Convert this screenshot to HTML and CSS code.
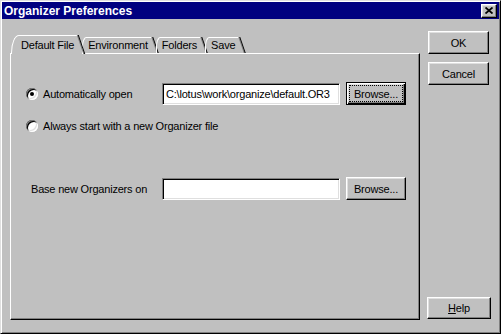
FILE: index.html
```html
<!DOCTYPE html>
<html lang="en">
<head>
    <meta charset="UTF-8">
    <title>Organizer Preferences</title>
    <link rel="stylesheet" href="styles.css">
</head>
<body>
    <div class="window">
        <div class="titlebar">
            <span class="title">Organizer Preferences</span>
            <button class="close" type="button">
                <svg width="8" height="7" viewBox="0 0 8 7"><path d="M0.5 0.5 L7.5 6.5 M7.5 0.5 L0.5 6.5" stroke="#000" stroke-width="1.8" fill="none"/></svg>
            </button>
        </div>

        <div class="main">
            <div class="sheet">
                <div class="tabs">
                    <div class="tab selected">Default File</div>
                    <div class="tab">Environment</div>
                    <div class="tab">Folders</div>
                    <div class="tab">Save</div>
                </div>
                <div class="panel">
                    <div class="row">
                        <label class="choice"><span class="radio checked"></span>Automatically open</label>
                        <input class="field" type="text" value="C:\lotus\work\organize\default.OR3">
                        <button class="btn default" type="button">Browse...</button>
                    </div>
                    <div class="row short">
                        <label class="choice wide"><span class="radio"></span>Always start with a new Organizer file</label>
                    </div>
                    <div class="row base">
                        <label class="choice indent">Base new Organizers on</label>
                        <input class="field" type="text" value="">
                        <button class="btn" type="button">Browse...</button>
                    </div>
                </div>
            </div>

            <div class="actions">
                <button class="btn action" type="button">OK</button>
                <button class="btn action" type="button">Cancel</button>
                <button class="btn help" type="button"><u>H</u>elp</button>
            </div>
        </div>
    </div>
</body>
</html>
```

FILE: styles.css
```css
body {
    margin: 0;
    font-family: 'Liberation Sans', Arial, sans-serif;
    font-size: 11px;
    letter-spacing: -0.2px;
    color: #000;
    background: #c0c0c0;
}

.window {
    width: 501px;
    height: 334px;
    box-sizing: border-box;
    padding: 1px;
    background: #c0c0c0;
    border: 1px solid;
    border-color: #dfdfdf #000 #000 #dfdfdf;
    box-shadow: inset 1px 1px #fff, inset -1px -1px #808080;
}

.titlebar {
    height: 17px;
    background: #000080;
    display: flex;
    align-items: center;
    justify-content: space-between;
    padding: 0 2px 0 2px;
}

.title {
    color: #fff;
    font-weight: bold;
    font-size: 12px;
    letter-spacing: 0;
}

.close {
    width: 16px;
    height: 14px;
    padding: 0;
    display: flex;
    align-items: center;
    justify-content: center;
    background: #c0c0c0;
    border: 1px solid;
    border-color: #fff #000 #000 #fff;
    box-shadow: inset -1px -1px #808080, inset 1px 1px #dfdfdf;
}

.main {
    display: flex;
    padding: 12px 6px 0 8px;
}

.sheet {
    width: 410px;
}

.tabs {
    display: flex;
    align-items: flex-end;
    height: 22px;
    padding-left: 1px;
}

.tab {
    position: relative;
    height: 16px;
    line-height: 16px;
    padding: 0 8px 0 6px;
    white-space: nowrap;
}

.tab::before {
    content: "";
    position: absolute;
    left: 0;
    right: 4px;
    top: 0;
    bottom: 0;
    border-top: 1px solid #fff;
    border-left: 1px solid #fff;
    border-top-left-radius: 4px 10px;
}

.tab::after {
    content: "";
    position: absolute;
    right: 0;
    top: 0;
    bottom: 0;
    width: 1px;
    background: #000;
    box-shadow: -1px 0 #808080;
    transform: skewX(19deg);
}

.tab.selected {
    height: 19px;
    padding: 2px 8px 0 10px;
    margin-bottom: -1px;
    box-sizing: border-box;
    background: #c0c0c0;
    z-index: 1;
}

.tab.selected::before {
    bottom: 0;
    border-top-left-radius: 8px 18px;
}

.panel {
    height: 267px;
    box-sizing: border-box;
    padding: 28px 0 0 15px;
    border: 1px solid;
    border-color: #fff #000 #000 #fff;
    box-shadow: inset -1px -1px #808080;
}

.row {
    display: flex;
    align-items: center;
    height: 23px;
}

.row.short {
    height: 14px;
    margin-top: 14px;
}

.row.base {
    margin-top: 44px;
}

.choice {
    width: 136px;
    display: flex;
    align-items: center;
    gap: 5px;
    white-space: nowrap;
}

.choice.wide {
    width: auto;
}

.choice.indent {
    padding-left: 5px;
    width: 131px;
}

.radio {
    position: relative;
    width: 12px;
    height: 12px;
    border-radius: 50%;
    background: #fff;
    box-shadow: inset 1px 1px #808080, inset -1px -1px #fff, inset 2px 2px #000, inset -2px -2px #dfdfdf;
}

.radio.checked::after {
    content: "";
    position: absolute;
    left: 4px;
    top: 4px;
    width: 4px;
    height: 4px;
    border-radius: 50%;
    background: #000;
}

.field {
    width: 178px;
    height: 22px;
    box-sizing: border-box;
    margin: 1px 0 0 0;
    padding: 0 0 0 3px;
    font: inherit;
    letter-spacing: inherit;
    background: #fff;
    border: 1px solid;
    border-color: #808080 #fff #fff #808080;
    box-shadow: inset 1px 1px #000, inset -1px -1px #dfdfdf;
    outline: none;
}

.btn {
    position: relative;
    width: 60px;
    height: 23px;
    margin-left: 6px;
    padding: 0;
    font: inherit;
    letter-spacing: inherit;
    color: #000;
    background: #c0c0c0;
    border: 1px solid;
    border-color: #fff #000 #000 #fff;
    box-shadow: inset -1px -1px #808080, inset 1px 1px #dfdfdf;
}

.btn.default {
    border-color: #000;
    box-shadow: inset 1px 1px #fff, inset -1px -1px #000, inset -2px -2px #808080, inset 2px 2px #dfdfdf;
}

.btn.default::after {
    content: "";
    position: absolute;
    left: 2px;
    top: 2px;
    right: 2px;
    bottom: 2px;
    border: 1px dotted #000;
}

.actions {
    width: 64px;
    height: 289px;
    margin-left: 7px;
    display: flex;
    flex-direction: column;
}

.btn.action {
    width: 61px;
    margin-left: 1px;
    margin-bottom: 8px;
}

.btn.help {
    width: 64px;
    height: 22px;
    margin: auto 0 1px 0;
}
```
